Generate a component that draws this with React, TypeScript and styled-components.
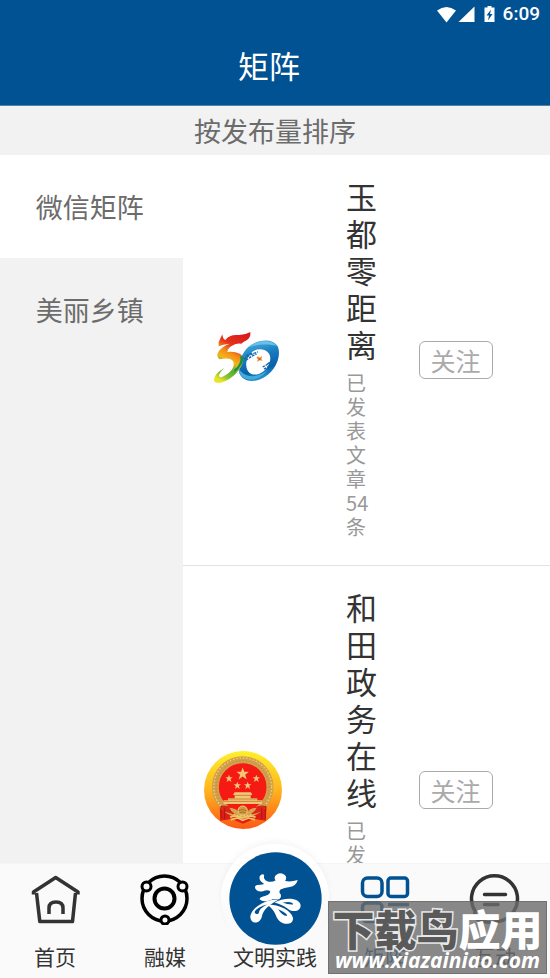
import React, { useState } from "react";
import styled, { createGlobalStyle } from "styled-components";

const blue = "#005293";

const GlobalStyle = createGlobalStyle`
  * { box-sizing: border-box; }
  body {
    margin: 0;
    background: #fff;
    font-family: "Noto Sans CJK SC", "Noto Sans", sans-serif;
  }
  button { font-family: inherit; cursor: pointer; }
`;

const Screen = styled.div`
  position: relative;
  display: flex;
  flex-direction: column;
  height: 100vh;
  overflow: hidden;
`;

const StatusBar = styled.div`
  display: flex;
  align-items: center;
  justify-content: flex-end;
  height: 28px;
  padding-right: 10px;
  background: ${blue};
  color: #fff;
  font: 500 19px/28px Roboto, sans-serif;
`;

const StatusIcons = styled.svg`
  width: 60px;
  height: 20px;
  margin-right: 6px;
`;

const Header = styled.header`
  flex: none;
  padding: 13px 12px 16px 0;
  border-bottom: 1px solid #4c84b0;
  background: ${blue};
  text-align: center;
`;

const Title = styled.h1`
  margin: 0;
  color: #fff;
  font-size: 31px;
  font-weight: 400;
  line-height: 48px;
`;

const SortButton = styled.button`
  flex: none;
  height: 49px;
  padding: 0;
  border: 0;
  background: #f2f2f2;
  color: #6c6c6c;
  font-size: 27px;
  line-height: 40px;
`;

const Body = styled.div`
  display: grid;
  grid-template-columns: 1fr 2fr;
  flex: 1;
  min-height: 0;
`;

const Sidebar = styled.aside`
  display: flex;
  flex-direction: column;
  background: #f2f2f2;
`;

const SideTab = styled.button<{ $active: boolean }>`
  height: 103px;
  padding: 0 4px 0 0;
  border: 0;
  background: ${(p) => (p.$active ? "#fff" : "transparent")};
  color: #6c6c6c;
  font-size: 27px;
`;

const List = styled.ul`
  margin: 0;
  padding: 0;
  overflow: hidden;
  list-style: none;
`;

const Account = styled.li`
  display: grid;
  grid-template-columns: 41% 21% 1fr;
  align-items: center;
  padding: 22px 0 22px 21px;
  border-bottom: 1px solid #e3e3e3;
`;

const Avatar = styled.svg`
  width: 78px;
  height: 78px;
`;

const AccountText = styled.div`
  width: 31px;
  padding-bottom: 4px;
`;

const AccountName = styled.h2`
  margin: 0 0 9px;
  color: #333;
  font-size: 31px;
  font-weight: 400;
  line-height: 37px;
`;

const AccountMeta = styled.p`
  width: 24px;
  margin: 0;
  color: #999;
  font-size: 20px;
  line-height: 24px;
`;

const FollowButton = styled.button`
  justify-self: start;
  width: 74px;
  height: 38px;
  padding: 0;
  border: 1px solid #aaa;
  border-radius: 6px;
  background: #fff;
  color: #aaa;
  font-size: 25px;
  line-height: 34px;
`;

const Nav = styled.nav`
  position: relative;
  display: grid;
  grid-template-rows: minmax(0, 1fr);
  grid-template-columns: repeat(5, 1fr);
  flex: none;
  height: 115px;
  border-top: 1px solid #f5f5f5;
  background: #fafafa;
`;

const NavLink = styled.a`
  display: flex;
  flex-direction: column;
  align-items: center;
  justify-content: flex-end;
  padding-bottom: 7px;
  color: ${(p) => (p["aria-current"] ? blue : "#333")};
  font-size: 21px;
  line-height: 30px;
  text-decoration: none;
  white-space: nowrap;
`;

const NavIcon = styled.svg`
  flex: none;
  width: 52px;
  height: 52px;
  margin-bottom: 16px;
`;

const Halo = styled.span`
  display: grid;
  flex: none;
  place-items: center;
  width: 108px;
  height: 108px;
  margin-bottom: -11px;
  border-radius: 50%;
  background: linear-gradient(#fff 40%, #fafafa 60%);
  box-shadow: 0 -3px 6px rgba(0, 0, 0, 0.04);
`;

const HaloLabel = styled.span`
  position: relative;
`;

const Emblem = styled.svg`
  width: 93px;
  height: 93px;
`;

const Watermark = styled.div`
  position: absolute;
  right: 3px;
  bottom: 4px;
  width: 219px;
  height: 73px;
  border: 1px solid rgba(80, 80, 80, 0.4);
  background: rgba(108, 108, 108, 0.8);
  color: #fff;
  text-align: center;
  pointer-events: none;
`;

const WatermarkName = styled.div`
  margin-top: 4px;
  font-size: 42px;
  font-weight: 900;
  line-height: 44px;
  white-space: nowrap;
`;

const WatermarkDark = styled.span`
  color: #5a5a5a;
  -webkit-text-stroke: 3px #e8e8e8;
  paint-order: stroke fill;
`;

const WatermarkSite = styled.div`
  font: italic 700 21px/20px "Open Sans", sans-serif;
`;

function WifiBattery() {
  return (
    <StatusIcons viewBox="0 0 60 20" aria-hidden="true">
      <path d="M0 6.500Q9.500-.5 19 6.500L9.500 18.500Z" fill="#fff" />
      <path d="M37.500 2.500V18H21.500Z" fill="#fff" />
      <path d="M47.500 3.500h3V2h4v1.500h3V18h-10Z" fill="#fff" />
      <path d="m54 5.500-4.500 6h2.500l-1 5 4.500-6.500h-2.500Z" fill={blue} />
    </StatusIcons>
  );
}

function FiftyLogo() {
  return (
    <Avatar viewBox="42 33 234 234" role="img" aria-label="玉都零距离">
      <defs>
        <linearGradient id="five" x1="0.7" y1="0" x2="0.3" y2="1">
          <stop offset="0" stopColor="#d91c1c" />
          <stop offset="0.28" stopColor="#e4321b" />
          <stop offset="0.45" stopColor="#f39019" />
          <stop offset="0.58" stopColor="#f3b51b" />
          <stop offset="0.74" stopColor="#58ad35" />
          <stop offset="0.88" stopColor="#86c52b" />
          <stop offset="1" stopColor="#e8e526" />
        </linearGradient>
        <linearGradient id="zero" x1="0.2" y1="0" x2="0.5" y2="1">
          <stop offset="0" stopColor="#4ab4e2" />
          <stop offset="0.45" stopColor="#1678bd" />
          <stop offset="0.75" stopColor="#0860aa" />
          <stop offset="1" stopColor="#2b9bd8" />
        </linearGradient>
      </defs>
      <path
        fillRule="evenodd"
        d="M174 112C201 87 248 84 263 109C277 141 252 191 213 207C177 223 145 206 146 174C148 147 160 126 174 112ZM190 123C165 142 163 174 178 188C194 201 222 191 234 168C246 146 242 129 225 121C213 116 202 117 190 123Z"
        fill="url(#zero)"
      />
      <path d="M174 112C201 88 243 86 261 108C233 99 199 104 174 112Z" fill="#69bfe4" />
      <path d="M146 175C163 207 208 205 234 178C219 205 180 219 157 201Q146 192 146 175Z" fill="#44abd9" />
      <path
        d="M86 109L86 96L97 73Q98 87 106 90Q118 73 145 75Q163 76 181 66Q183 82 170 91Q159 97 154 101Q137 98 125 108Q113 116 112 126Q134 124 150 131Q164 141 158 159C149 186 118 212 93 218Q73 221 72 209Q73 191 103 174Q86 191 87 198Q91 207 112 192C132 178 137 157 125 149Q111 142 89 148Q77 139 86 124Q95 110 119 101Q99 103 86 109Z"
        fill="url(#five)"
      />
      <path d="M133 178Q155 162 151 137L160 141Q161 156 151 169Q143 183 133 187Z" fill="#129447" />
      <g fill="none" stroke="#1267ad" strokeWidth="4" strokeDasharray="8 3">
        <path d="M163 147Q178 133 204 126M168 151Q183 139 200 132M169 138Q176 131 190 130" />
        <path d="M222 177Q238 170 252 155M218 171Q233 163 251 151M231 163Q239 158 247 153" />
      </g>
      <path d="M203 139L209 143L217 138L214 147L218 152L209 151L201 156L204 148L200 143Z" fill="#ec8527" />
      <path d="M209 143L212 147L208 151L206 147Z" fill="#c9531e" />
    </Avatar>
  );
}

const star = "M0-18L4.500-6L17-6L7 2L11 15L0 7L-11 15L-7 2L-17-6L-4.500-6Z";

function NationalEmblem() {
  return (
    <Avatar viewBox="42 30 234 234" role="img" aria-label="和田政务在线">
      <defs>
        <linearGradient id="disc" x1="0" y1="0" x2="0" y2="1">
          <stop offset="0" stopColor="#fff02a" />
          <stop offset="0.5" stopColor="#ffb51f" />
          <stop offset="1" stopColor="#fb5914" />
        </linearGradient>
      </defs>
      <circle cx="159" cy="147" r="117" fill="url(#disc)" />
      <path d="M89 194L230 194L227 239L192 234L159 248L125 234L91 239Z" fill="#df1c16" />
      <circle cx="158" cy="138" r="82" fill="#f51a13" stroke="#d2a04a" strokeWidth="21" />
      <circle cx="158" cy="138" r="87" fill="none" stroke="#ecd084" strokeWidth="4" strokeDasharray="4 6" />
      <circle cx="158" cy="138" r="79" fill="none" stroke="#b98334" strokeWidth="3" strokeDasharray="3 7" />
      <g fill="#f1c775">
        <path d={star} transform="translate(158 99) scale(1.1)" />
        <path d={star} transform="translate(117 113) scale(.65)" />
        <path d={star} transform="translate(199 113) scale(.65)" />
        <path d={star} transform="translate(142 134) scale(.65)" />
        <path d={star} transform="translate(173 134) scale(.65)" />
      </g>
      <path d="M134 154H183L187 162H182V172H202V178H216V189H101V178H114V172H134V162H129Z" fill="#f1c775" />
      <path d="M134 163H182M115 174H202M102 181H215" stroke="#ba641e" strokeWidth="2" />
      <path d="M92 194Q121 192 139 207L158 198L178 207Q198 192 227 194L220 210L188 220L158 207L129 220L98 210Z" fill="#dc2418" />
      <path d="M118 200Q140 202 147 214Q158 200 171 214Q178 202 200 200Q191 219 171 221H147Q127 219 118 200Z" fill="#d7a550" />
      <circle cx="158" cy="209" r="14" fill="#cf9a40" stroke="#f1cf79" strokeWidth="3" />
      <path d="M120 229Q139 221 158 231Q177 221 197 229M122 236L144 231L158 238L175 231L195 236" fill="none" stroke="#efc466" strokeWidth="5" />
      <path d="M146 209Q158 202 170 209M148 216Q158 209 168 216" fill="none" stroke="#945a20" strokeWidth="2" />
      <path d="M93 195V235M104 202V235M215 202V235M226 195V235" stroke="#aa1813" strokeWidth="3" />
    </Avatar>
  );
}

function HomeIcon() {
  return (
    <NavIcon viewBox="29 873 52 52" fill="none" stroke="#333" strokeWidth="3.500" strokeLinejoin="round">
      <path d="M33.500 894.500V892L55.700 877.500L78 892V894.500M36.500 893L39.800 921.500H72.500L75.500 893M49 914V908Q49 902 56 902Q63 902 63 908V914" />
    </NavIcon>
  );
}

function MediaIcon() {
  return (
    <NavIcon viewBox="139 873 52 52" fill="none" stroke="#000" strokeWidth="3.500">
      <circle cx="164.500" cy="898.500" r="22.500" />
      <circle cx="164.500" cy="898.500" r="10" strokeWidth="4" />
      <g fill="#fafafa" strokeWidth="3">
        <circle cx="146.500" cy="886.500" r="4.500" />
        <circle cx="182.500" cy="886.500" r="4.500" />
        <circle cx="165" cy="920" r="4" />
      </g>
    </NavIcon>
  );
}

function PracticeIcon() {
  return (
    <Emblem viewBox="55 50 280 280">
      <circle cx="195" cy="190" r="139" fill={blue} />
      <g fill="#fff">
        <path d="M147 124Q154 114 161 119Q157 130 168 137Q182 143 195 136Q188 125 199 118Q211 110 223 119Q231 127 224 137Q240 141 262 134Q257 152 238 155Q221 157 210 163Q203 170 211 178Q213 188 206 192Q190 190 177 196Q156 202 147 192Q148 186 165 182Q179 177 179 168Q172 162 157 168Q141 172 134 160Q131 151 140 149Q152 149 161 146Q145 138 147 124Z" />
        <path
          fillRule="evenodd"
          d="M205 193C170 190 122 216 119 245C122 272 150 265 154 244C158 224 175 209 205 193ZM170 208Q146 219 144 235Q134 240 132 231Q141 214 170 208Z"
        />
        <path
          fillRule="evenodd"
          d="M170 209C196 205 244 223 248 250C247 271 218 270 206 257C193 244 197 227 170 209ZM203 222Q215 241 229 243Q234 235 203 222Z"
        />
        <path
          fillRule="evenodd"
          d="M192 202C218 188 261 185 270 207C275 226 250 234 235 223C221 213 213 208 192 202ZM216 202Q232 209 248 208Q248 197 216 202Z"
        />
      </g>
    </Emblem>
  );
}

function MatrixIcon() {
  return (
    <NavIcon viewBox="359 873 52 52" fill="none" stroke={blue} strokeWidth="3.500">
      <rect x="362.500" y="878" width="19.500" height="18.500" rx="5" />
      <rect x="388" y="878" width="19.500" height="18.500" rx="3" />
      <rect x="362.500" y="903" width="19.500" height="18.500" rx="4" />
      <path d="M388 904.500H409M388 912.500H409M388 921H409" />
    </NavIcon>
  );
}

function ChatIcon() {
  return (
    <NavIcon viewBox="469 873 52 52" fill="none" stroke="#333" strokeWidth="3.500" strokeLinecap="round">
      <path d="M475 911A23 23 0 1 1 514 911Q508 921 495 922Q483 923 475 918Z" />
      <path d="M484.500 894.500H505.500M484.500 904.500H498" />
    </NavIcon>
  );
}

const accounts = [
  { name: "玉都零距离", count: 54, Logo: FiftyLogo },
  { name: "和田政务在线", count: 42, Logo: NationalEmblem },
];

const categories = ["微信矩阵", "美丽乡镇"];

export default function App() {
  const [category, setCategory] = useState(categories[0]);
  return (
    <Screen>
      <GlobalStyle />
      <StatusBar>
        <WifiBattery />
        <span>6:09</span>
      </StatusBar>
      <Header>
        <Title>矩阵</Title>
      </Header>
      <SortButton type="button">按发布量排序</SortButton>
      <Body>
        <Sidebar>
          {categories.map((name) => (
            <SideTab
              key={name}
              type="button"
              $active={name === category}
              aria-pressed={name === category}
              onClick={() => setCategory(name)}
            >
              {name}
            </SideTab>
          ))}
        </Sidebar>
        <List>
          {accounts.map(({ name, count, Logo }) => (
            <Account key={name}>
              <Logo />
              <AccountText>
                <AccountName>{name}</AccountName>
                <AccountMeta>已发表文章{count}条</AccountMeta>
              </AccountText>
              <FollowButton type="button" aria-label={`关注 ${name}`}>
                关注
              </FollowButton>
            </Account>
          ))}
        </List>
      </Body>
      <Nav>
        <NavLink href="#home">
          <HomeIcon />
          首页
        </NavLink>
        <NavLink href="#media">
          <MediaIcon />
          融媒
        </NavLink>
        <NavLink href="#practice">
          <Halo>
            <PracticeIcon />
          </Halo>
          <HaloLabel>文明实践</HaloLabel>
        </NavLink>
        <NavLink href="#matrix" aria-current="page">
          <MatrixIcon />
          矩阵
        </NavLink>
        <NavLink href="#chat">
          <ChatIcon />
          互动
        </NavLink>
      </Nav>
      <Watermark>
        <WatermarkName>
          <WatermarkDark>下载鸟</WatermarkDark>应用
        </WatermarkName>
        <WatermarkSite>www.xiazainiao.com</WatermarkSite>
      </Watermark>
    </Screen>
  );
}
